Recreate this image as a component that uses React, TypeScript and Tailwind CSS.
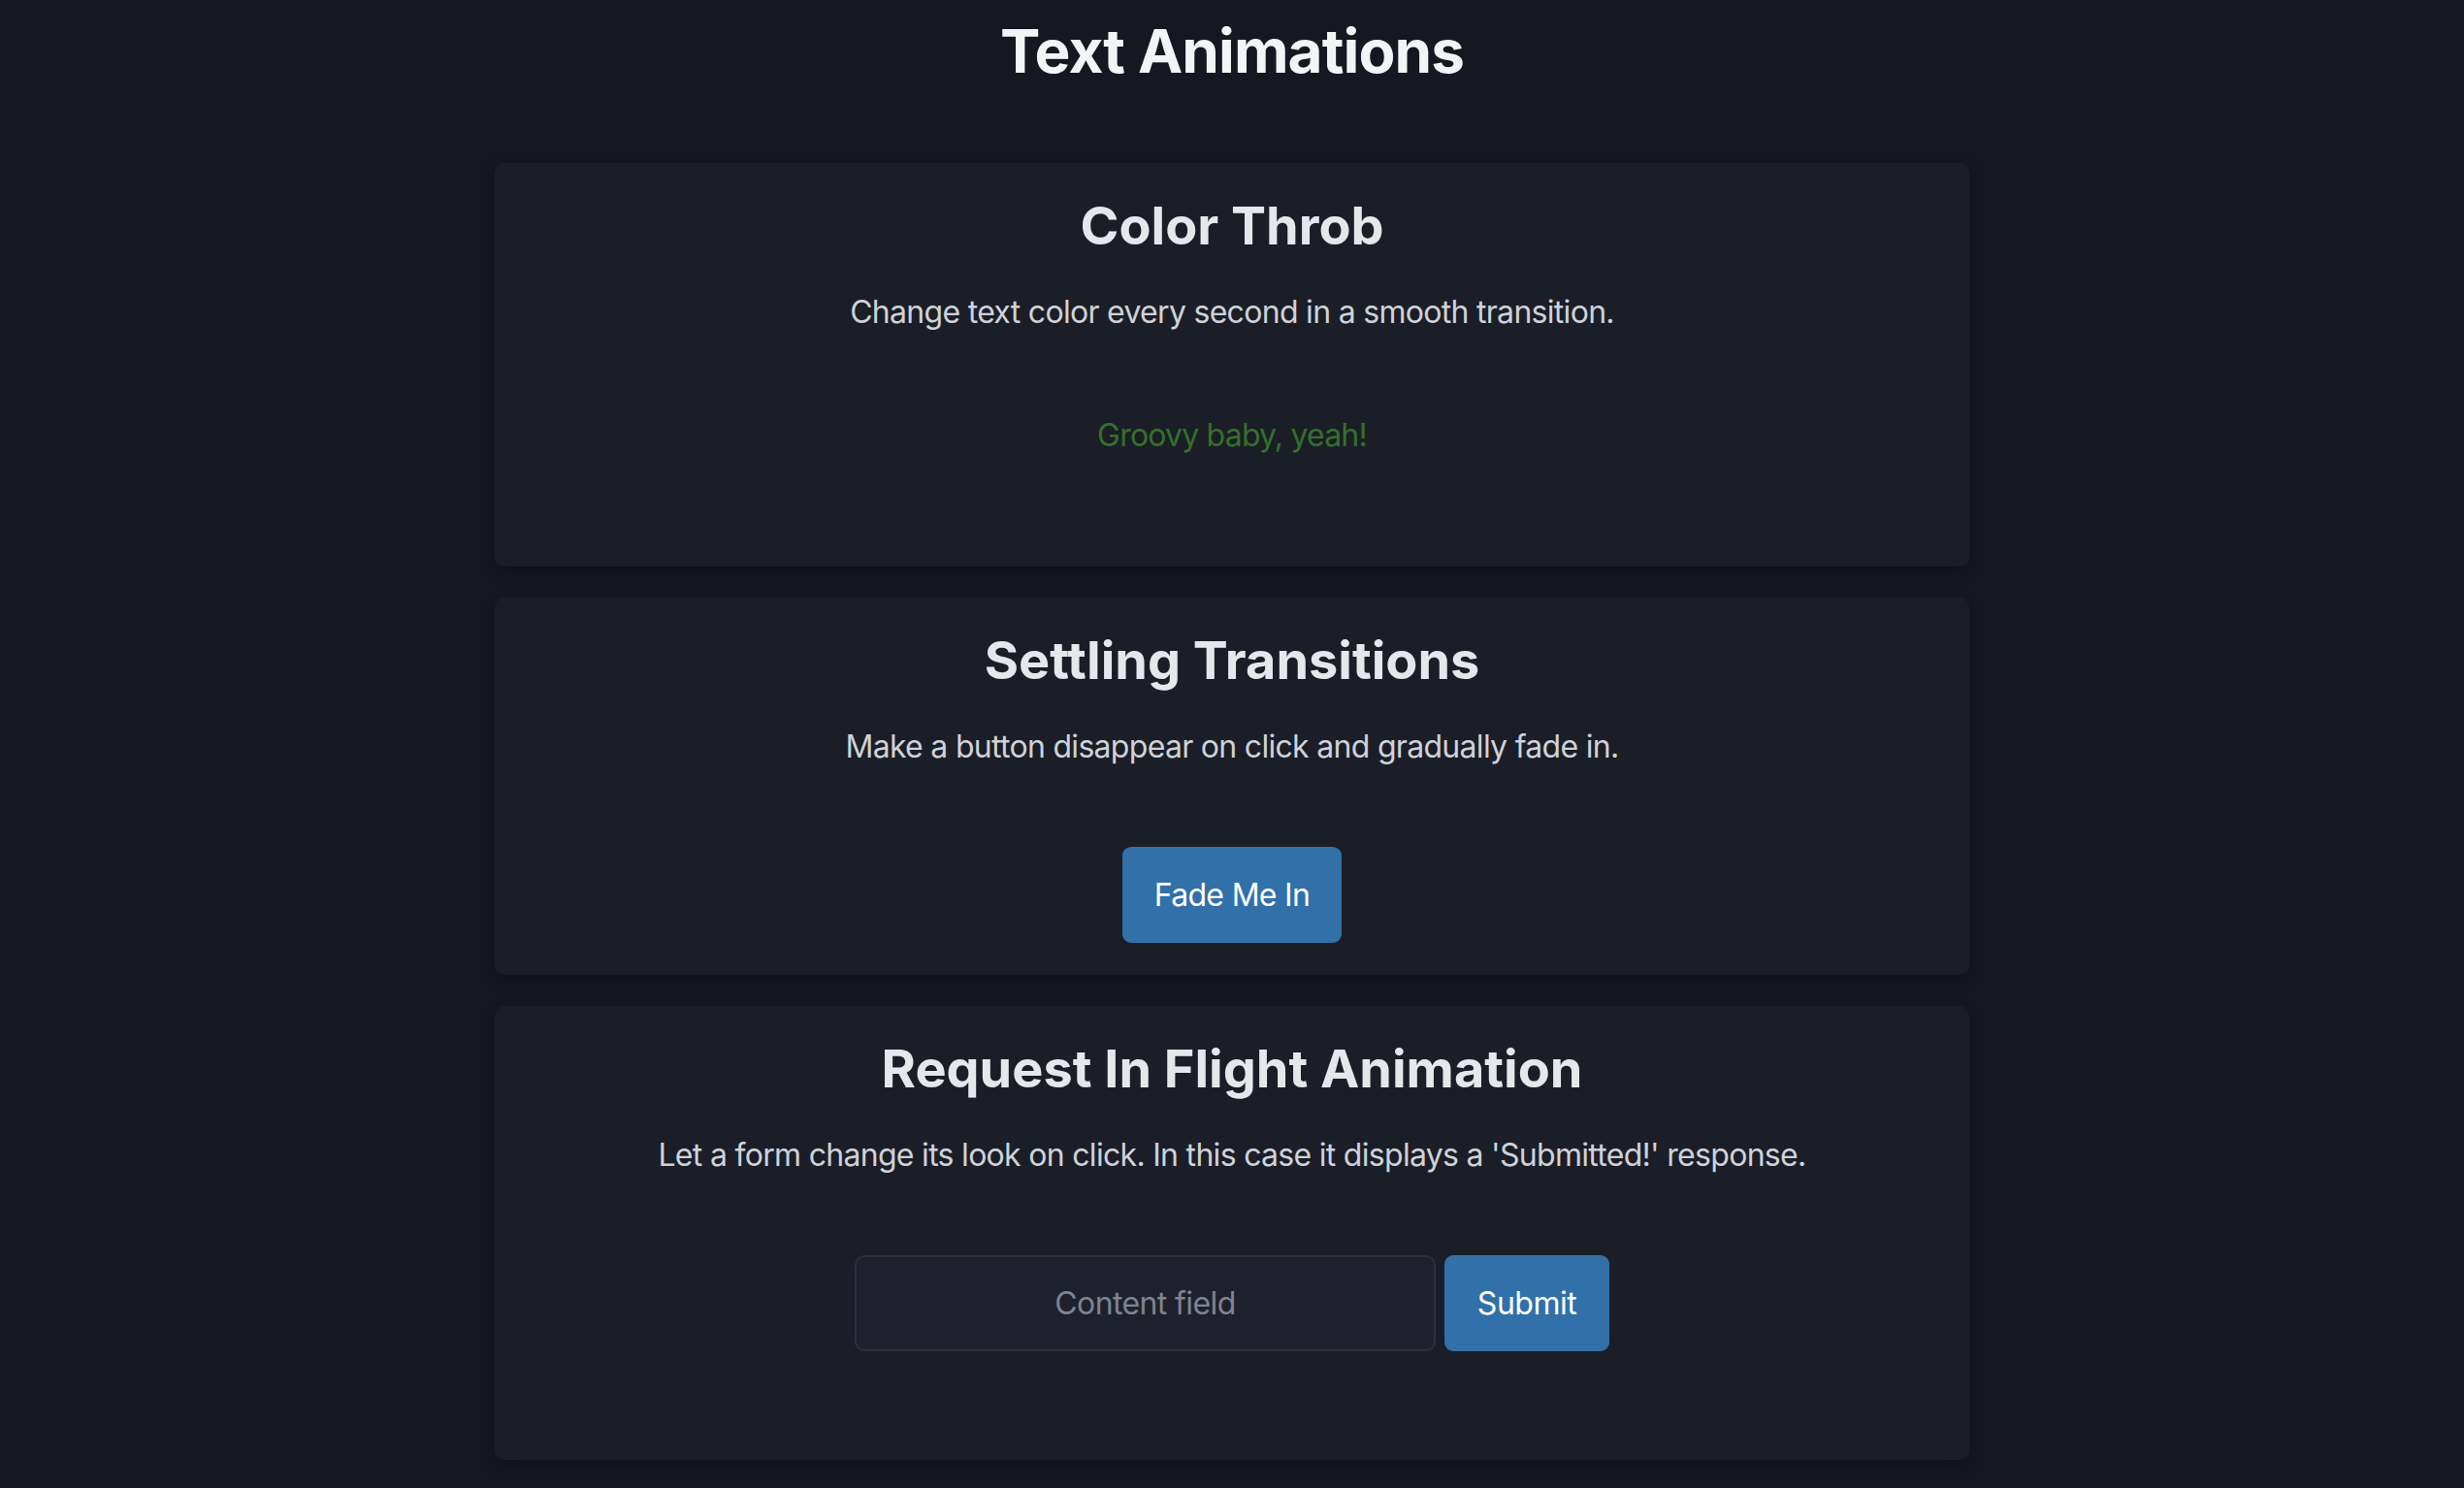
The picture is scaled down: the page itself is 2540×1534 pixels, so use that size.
import React from "react";

function Card({ title, text, children, bottom }: { title: string; text: string; children: React.ReactNode; bottom: string }) {
  return (
    <section className={`w-[1520px] rounded-[10px] bg-[#1b1e27] pt-8 shadow-[0_6px_16px_rgba(0,0,0,0.25)] ${bottom}`}>
      <h2 className="text-center text-[54px] font-bold leading-[66px] text-[#e5e7eb]">{title}</h2>
      <p className="mt-[32px] text-center text-[32px] leading-[48px] tracking-[-0.7px] text-[#cfd2d9]">{text}</p>
      <div className="mt-[79px] flex justify-center">{children}</div>
    </section>
  );
}

export default function App() {
  return (
    <div className="min-h-screen bg-[#151820] pb-8" style={{ fontFamily: "Inter, 'Liberation Sans', sans-serif" }}>
      <h1 className="pt-[14px] text-center text-[62px] font-bold leading-[78px] tracking-[-0.9px] text-[#f3f4f6]">Text Animations</h1>
      <main className="mt-[76px] flex flex-col items-center gap-8">
        <Card title="Color Throb" text="Change text color every second in a smooth transition." bottom="pb-[111px]">
          <p className="text-[32px] leading-[48px] tracking-[-0.8px] text-[#34702b]">Groovy baby, yeah!</p>
        </Card>
        <Card title="Settling Transitions" text="Make a button disappear on click and gradually fade in." bottom="pb-[33px]">
          <button className="h-[99px] w-[226px] rounded-[9px] bg-[#3170a8] text-[32px] tracking-[-0.7px] text-white">Fade Me In</button>
        </Card>
        <Card
          title="Request In Flight Animation"
          text="Let a form change its look on click. In this case it displays a 'Submitted!' response."
          bottom="pb-[112px]"
        >
          <form className="flex gap-[9px]" onSubmit={(e) => e.preventDefault()}>
            <input
              placeholder="Content field"
              className="h-[99px] w-[599px] rounded-[10px] border-2 border-[#2b2f3b] bg-[#1e212b] text-center text-[32px] tracking-[-0.6px] text-[#e5e7eb] outline-none placeholder:text-[#7f8392]"
            />
            <button className="h-[99px] w-[170px] rounded-[9px] bg-[#3170a8] text-[32px] tracking-[-0.5px] text-white">Submit</button>
          </form>
        </Card>
      </main>
    </div>
  );
}
